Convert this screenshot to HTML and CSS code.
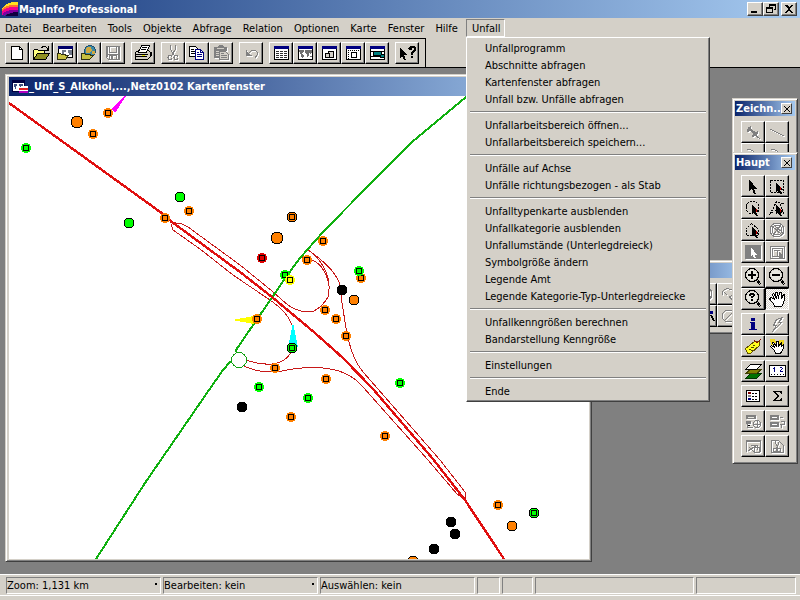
FILE: index.html
```html
<!DOCTYPE html>
<html lang="de">
<head>
    <meta charset="UTF-8">
    <meta name="viewport" content="width=device-width, initial-scale=1.0">
    <title>MapInfo Professional</title>
    <link rel="stylesheet" href="styles.css">
</head>
<body>
    <!-- icon sprite, all icons share a 20x18 grid -->
    <svg class="sprite" aria-hidden="true">
        <symbol id="new" viewBox="0 0 20 18"><path d="M4.5 2.5h8l3 3v10h-11z" fill="#fff" stroke="#000"/><path d="M12.500 2.500v3h3" fill="none" stroke="#000"/></symbol>
        <symbol id="open" viewBox="0 0 20 18"><path d="M2.500 15.500v-9l1-1h3l1 1h6v3" fill="#ffff80" stroke="#000"/><path d="M2.500 15.500l4-6h12l-4 6z" fill="#909020" stroke="#000"/><path d="M10.500 4.500l1-2h3l2 2v1M17.500 2v4h-4" fill="none" stroke="#000"/></symbol>
        <symbol id="opentable" viewBox="0 0 20 18"><path d="M3.500 2.500h14v11h-14z" fill="#fff" stroke="#000"/><path d="M3 2h15v3H3z" fill="#000068"/><path d="M7 6h4v2H9v2H7zM13 6h4v5h-3V9h-1z" fill="#707888"/><path d="M2.500 15.500v-6h3l1 1h4v1h3l-3 4z" fill="#c8c040" stroke="#303010"/></symbol>
        <symbol id="openweb" viewBox="0 0 20 18"><circle cx="11" cy="7" r="5.500" fill="#3a8aa8" stroke="#205070"/><path d="M8 3h4l1 3-3 3H7V6zM13 7h3v3h-3z" fill="#d0a840"/><path d="M2.500 15.500v-6h3l1 1h5v1h3l-4 4z" fill="#c8c040" stroke="#303010"/></symbol>
        <symbol id="save" viewBox="0 0 20 18"><path d="M3.500 2.500h13v13h-11l-2-2zM6.500 2.500v6h7v-6M6.500 15v-4h7v4" fill="none" stroke="#808080"/><path d="M5 10h10v1H5zM8 12h2v3H8zM15 3h1v12h-1zM4 3h1v10H4z" fill="#808080"/></symbol>
        <symbol id="print" viewBox="0 0 20 18"><path d="M2.500 8.500l3-2h10l2 2v4l-3 3h-12z" fill="#d4d0c8" stroke="#000"/><path d="M5.500 8.500l3-7h8l-3 7z" fill="#fff" stroke="#000"/><path d="M9 3.500h5M8 5.500h5M3 10.500h12M3 12.500h11M15 15l3-3V8" stroke="#000" fill="none"/><path d="M9 11h3v1H9z" fill="#e8e000"/></symbol>
        <symbol id="cut" viewBox="0 0 20 18"><path d="M7.500 1v4l4 7M12.500 1v4l-4 7" fill="none" stroke="#808080"/><ellipse cx="7" cy="13.500" rx="2" ry="2.500" fill="none" stroke="#808080"/><ellipse cx="13" cy="13.500" rx="2" ry="2.500" fill="none" stroke="#808080"/></symbol>
        <symbol id="copy" viewBox="0 0 20 18"><path d="M2.500 2.500h6l2 2v8h-8z" fill="#fff" stroke="#000"/><path d="M4 5.500h3M4 7.500h5M4 9.500h5" stroke="#000"/><path d="M8.500 5.500h5l3 3v7h-8z" fill="#fff" stroke="#000080"/><path d="M13.500 5.500v3h3M10 8.500h2M10 10.500h5M10 12.500h5" stroke="#000080" fill="none"/></symbol>
        <symbol id="paste" viewBox="0 0 20 18"><path d="M3 3h3l2-2h3l2 2h3v4h-3v7H3z" fill="#808080"/><path d="M6 4.500h7M5 7.500h3M5 9.500h3M5 11.500h3" stroke="#d4d0c8"/><path d="M8.500 7.500h6l3 3v5h-9z" fill="#d4d0c8" stroke="#808080"/><path d="M10 9.500h3M10 11.500h6M10 13.500h6" stroke="#808080"/></symbol>
        <symbol id="undo" viewBox="0 0 20 18"><path d="M5.500 6v5.500H11M6 11l3-3 2-2h3l2 2v3l-2 3" fill="none" stroke="#808080"/><path d="M6 8l4 4H6z" fill="#808080"/></symbol>
        <symbol id="table" viewBox="0 0 20 18"><path d="M3.500 2.500h14v13h-14z" fill="#fff" stroke="#000"/><path d="M3 2h15v3H3z" fill="#000080"/><path d="M5 7.500h11M5 9.500h11M5 11.500h11M5 13.500h11" stroke="#303030" stroke-dasharray="3 1"/></symbol>
        <symbol id="mapwin" viewBox="0 0 20 18"><path d="M3.500 2.500h14v13h-14z" fill="#fff" stroke="#000"/><path d="M3 2h15v3H3z" fill="#000080"/><path d="M4 6h5v1l-1 2H7v1l2 1v1l-1 2H7l-1-3-1-2-1-1zM10 6h7v2l-1 1v1h-1l-1-1v2l-1 2h-1v-3l-2-1zM15 12h2v1h-2z" fill="#707070"/></symbol>
        <symbol id="graph" viewBox="0 0 20 18"><path d="M3.500 2.500h14v13h-14z" fill="#fff" stroke="#000"/><path d="M3 2h15v3H3z" fill="#000080"/><path d="M6.500 9.500h4v4h-4zM9.500 7.500h5v6h-4v-4h-1z" fill="#d4d0c8" stroke="#000"/></symbol>
        <symbol id="layout" viewBox="0 0 20 18"><path d="M3.500 2.500h14v13h-14z" fill="#fff" stroke="#000"/><path d="M3 2h15v3H3z" fill="#000080"/><path d="M5 6.500h12" stroke="#000" stroke-dasharray="1 1"/><path d="M5.500 6v9" stroke="#000" stroke-dasharray="1 1"/><path d="M8.500 8.500h5v5h-5z" fill="#fff" stroke="#000"/></symbol>
        <symbol id="district" viewBox="0 0 20 18"><path d="M3.500 2.500h14v13h-14z" fill="#fff" stroke="#000"/><path d="M3 2h15v3H3z" fill="#000080"/><path d="M4 7.500h13M4 12.500h13" stroke="#000"/><path d="M6.500 7.500h8v3h3v3h-4v-2h-7z" fill="#008080" stroke="#000"/></symbol>
        <symbol id="help" viewBox="0 0 20 18"><path d="M3 3v11l2-2 2 4h2l-2-5h3z"/><path d="M11 4l2-2h4l2 2v3l-3 2v2h-2V8l3-2V4h-2v2h-3zM14 12h2v2h-2z"/></symbol>

        <symbol id="pointer" viewBox="0 0 20 18"><path d="M6 2v12l3-2 2 5h2l-2-5h3z"/></symbol>
        <symbol id="arrow" viewBox="0 0 20 18"><path d="M9 5v10l2-1 2 3h2l-2-4h3z"/><path d="M13.500 10v3" stroke="#c00000"/></symbol>
        <symbol id="selrect" viewBox="0 0 20 18"><path d="M3.500 3.500h13v12h-13z" fill="none" stroke="#000" stroke-dasharray="2 1"/><use href="#arrow"/></symbol>
        <symbol id="selradius" viewBox="0 0 20 18"><circle cx="9.500" cy="8.500" r="6.500" fill="none" stroke="#000" stroke-dasharray="2 1"/><use href="#arrow"/></symbol>
        <symbol id="selpoly" viewBox="0 0 20 18"><path d="M9.500 2.500l-6 12 5-3 8 3-3-9 2-1z" fill="none" stroke="#000" stroke-dasharray="2 1"/><use href="#arrow"/></symbol>
        <symbol id="selborder" viewBox="0 0 20 18"><path d="M8.500 2.500l-5 5v7h12v-6z" fill="none" stroke="#000" stroke-dasharray="2 1"/><use href="#arrow"/></symbol>
        <symbol id="unselect" viewBox="0 0 20 18"><circle cx="10" cy="9" r="7" fill="none" stroke="#808080"/><circle cx="10" cy="9" r="5" fill="none" stroke="#808080"/><path d="M5 5l10 9M7 4l9 8M6 14l8-10" stroke="#808080"/></symbol>
        <symbol id="invert" viewBox="0 0 20 18"><path d="M2 2h16v14H2z" fill="#808080"/><path d="M8 4v9l2-1 1 3h2l-1-3h2z" fill="#fff"/></symbol>
        <symbol id="infowin" viewBox="0 0 20 18"><path d="M3.500 3.500h14v12h-14zM5.500 5.500h10v8h-10zM7 7.500h6M10.500 8v5" fill="none" stroke="#808080"/><path d="M12 9v6l4 1v-3z" fill="#808080"/></symbol>
        <symbol id="lens" viewBox="0 0 20 18"><circle cx="9" cy="7" r="6.500" fill="none" stroke="#000"/><circle cx="9" cy="7" r="5" fill="#e8e8e0"/><path d="M13 12l4 5M14 11l4 5" stroke="#000"/></symbol>
        <symbol id="zoomin" viewBox="0 0 20 18"><use href="#lens"/><path d="M5 6h8v2H5zM8 3h2v8H8z"/></symbol>
        <symbol id="zoomout" viewBox="0 0 20 18"><use href="#lens"/><path d="M5 6h8v2H5z"/></symbol>
        <symbol id="zoomview" viewBox="0 0 20 18"><use href="#lens"/><path d="M6 4h1V3h4v1h1v2h-1v1h-1v1H8V6h2V5H8v1H6zM8 9h2v2H8z"/></symbol>
        <symbol id="hand" viewBox="0 0 20 18"><path d="M7.500 16.500l-1-3-3-3-1-2 2-1 3 2-2-5 1-1 1 1 2 4-1-6h2l1 6 1-6h2v6l2-4h1v5l-1 4-2 3z" fill="#fff" stroke="#000"/></symbol>
        <symbol id="info" viewBox="0 0 20 18"><path d="M8 3h4v3H8zM7 7h5v7h2v1H6v-1h2V8H7z" fill="#000080"/></symbol>
        <symbol id="hotlink" viewBox="0 0 20 18"><path d="M15.500 2.500l-6 2-3 6h3l-4 6 9-9h-3z" fill="none" stroke="#808080"/></symbol>
        <symbol id="label" viewBox="0 0 20 18"><path d="M2.500 11.500l9-7h5v4l-9 8h-3z" fill="#ffff20" stroke="#605000"/><path d="M6 12.500h2M8 10.500h3M10 8.500h2M8 13.500h2" stroke="#504000"/><path d="M14 6l4-4M11 3l3 3" stroke="#900000"/></symbol>
        <symbol id="drag" viewBox="0 0 20 18"><path d="M3 2h5l1 3-2 3H4zM12 3h5v3l-3 3-2-2z" fill="#f0d820"/><path d="M8.500 16.500l-1-3-4-4 1-1 3 2-2-5h1l3 4v-5h2v5l3-4v4l2-2v4l-3 5z" fill="#fff" stroke="#000"/></symbol>
        <symbol id="layers" viewBox="0 0 20 18"><path d="M2.500 16.500l5-5h11l-5 5z" fill="#007000" stroke="#003000"/><path d="M2.500 11.500l5-4h11l-5 4z" fill="#808000" stroke="#404000"/><path d="M2.500 7.500l5-5h11l-5 5z" fill="#fff" stroke="#000"/></symbol>
        <symbol id="ruler" viewBox="0 0 20 18"><path d="M2.500 3.500h16v11h-16z" fill="#fff" stroke="#000"/><path d="M7.500 5v5M6 6.500h1M13 5.500h2M15.500 6v1M14.500 7v1M13.500 8v1M13 9.500h3" stroke="#000080" fill="none"/><path d="M4 12.500h14" stroke="#000" stroke-dasharray="1 2"/></symbol>
        <symbol id="legend" viewBox="0 0 20 18"><path d="M3.500 3.500h13v11h-13z" fill="#fff" stroke="#000"/><path d="M5 5h3v2H5z" fill="#800000"/><path d="M5 8h3v2H5z" fill="#808080"/><path d="M5 11h3v2H5z" fill="#000080"/><path d="M9 6.500h6M9 9.500h6M9 12.500h6" stroke="#000" stroke-dasharray="2 1"/></symbol>
        <symbol id="sum" viewBox="0 0 20 18"><path d="M6 4h9v3h-1l-1-2H9l3 4-3 4h4l1-2h1v3H6v-1l4-4-4-4z"/></symbol>
        <symbol id="target" viewBox="0 0 20 18"><path d="M3 3h10v4H3zM3 9h5v3H3z" fill="#808080"/><path d="M5 5.500h6M3.500 12.500v2h6M12 9.500h3" stroke="#e8e8e0"/><circle cx="14" cy="12" r="3.500" fill="none" stroke="#808080"/><path d="M4.500 12v3h5M11 12.500h6M14.500 9v6" stroke="#808080" fill="none"/></symbol>
        <symbol id="assign" viewBox="0 0 20 18"><path d="M3 3h9v5H3zM3 10h9v5H3z" fill="#808080"/><path d="M5 5.500h5M5 12.500h5" stroke="#fff"/><path d="M13 5.500h3M14 9.500h3v3h-3v3M13 12.500h4" stroke="#808080" fill="none"/></symbol>
        <symbol id="clip" viewBox="0 0 20 18"><path d="M3.500 15v-12h14v12M3 4.500h14M5 14l9-6M6 10l5 5M8 8h6v5" fill="none" stroke="#808080"/><circle cx="14" cy="13" r="3" fill="none" stroke="#808080"/></symbol>
        <symbol id="clipset" viewBox="0 0 20 18"><path d="M4.500 15.500v-12h7l5 5v7zM8 4l3 8M12 5l-3 8" fill="none" stroke="#808080"/><circle cx="8" cy="13" r="2" fill="none" stroke="#808080"/><circle cx="12" cy="13" r="2" fill="none" stroke="#808080"/></symbol>
        <symbol id="pin" viewBox="0 0 20 18"><path d="M5 4l3-1v3l5 3 2-1v3l-2 1 4 4-5-3-3 1 1-3-3-3-3 1z" fill="#808080"/></symbol>
        <symbol id="line" viewBox="0 0 20 18"><path d="M3 6l14 7" stroke="#808080"/></symbol>
        <symbol id="arc" viewBox="0 0 20 18"><path d="M4 4q8 0 11 10" fill="none" stroke="#808080"/></symbol>
        <symbol id="shape" viewBox="0 0 20 18"><path d="M3 10q0-7 7-6 6 1 4 6l-4 2 4 3M5 7l3 3" fill="none" stroke="#808080"/></symbol>
        <symbol id="ellipse" viewBox="0 0 20 18"><ellipse cx="10" cy="9" rx="7" ry="6" fill="none" stroke="#808080"/><path d="M5 14L15 4" stroke="#808080"/></symbol>
        <symbol id="node" viewBox="0 0 20 18"><path d="M14 4h4v3h-4z" fill="#000080"/><path d="M15 8h2l3 6h-2z"/></symbol>
    </svg>

    <header class="titlebar app-title">
        <svg class="logo" viewBox="0 0 16 16"><path d="M0 7Q6 0 16 1v4Q6 4 0 11z" fill="#ffe020"/><path d="M0 8Q6 3 16 4v3Q6 7 0 11z" fill="#ff7030"/><path d="M0 10Q6 5 16 6v4Q6 9 0 14z" fill="#f00090"/><path d="M0 13Q6 8 16 9v3Q7 11 2 15z" fill="#8000a0"/><path d="M3 15Q8 11 16 11v4z" fill="#100040"/></svg>
        <h1>MapInfo Professional</h1>
        <div class="window-buttons">
            <button aria-label="Minimieren"><svg viewBox="0 0 12 10"><path d="M2 7h6v2H2z"/></svg></button>
            <button aria-label="Wiederherstellen"><svg viewBox="0 0 12 10"><path d="M4 0h7v6H9V5h1V2H5v1H4zM1 3h7v6H1zM2 5v3h5V5z" fill-rule="evenodd"/></svg></button>
            <button aria-label="Schließen"><svg viewBox="0 0 12 10"><path d="M2 1h2l2 2 2-2h2L7 5l3 4H8L6 6 4 9H2l3-4z"/></svg></button>
        </div>
    </header>

    <nav class="menubar">
        <button>Datei</button>
        <button>Bearbeiten</button>
        <button>Tools</button>
        <button>Objekte</button>
        <button>Abfrage</button>
        <button>Relation</button>
        <button>Optionen</button>
        <button>Karte</button>
        <button>Fenster</button>
        <button>Hilfe</button>
        <div class="menu-open">
            <button class="active">Unfall</button>
            <div class="dropdown">
                <button>Unfallprogramm</button>
                <button>Abschnitte abfragen</button>
                <button>Kartenfenster abfragen</button>
                <button>Unfall bzw. Unfälle abfragen</button>
                <hr>
                <button>Unfallarbeitsbereich öffnen...</button>
                <button>Unfallarbeitsbereich speichern...</button>
                <hr>
                <button>Unfälle auf Achse</button>
                <button>Unfälle richtungsbezogen - als Stab</button>
                <hr>
                <button>Unfalltypenkarte ausblenden</button>
                <button>Unfallkategorie ausblenden</button>
                <button>Unfallumstände (Unterlegdreieck)</button>
                <button>Symbolgröße ändern</button>
                <button>Legende Amt</button>
                <button>Legende Kategorie-Typ-Unterlegdreiecke</button>
                <hr>
                <button>Unfallkenngrößen berechnen</button>
                <button>Bandarstellung Kenngröße</button>
                <hr>
                <button>Einstellungen</button>
                <hr>
                <button>Ende</button>
            </div>
        </div>
    </nav>

    <div class="toolbar-row">
        <div class="toolbar">
            <div class="group">
                <button class="tool" aria-label="Neu"><svg><use href="#new"/></svg></button>
                <button class="tool" aria-label="Öffnen"><svg><use href="#open"/></svg></button>
                <button class="tool" aria-label="Tabelle öffnen"><svg><use href="#opentable"/></svg></button>
                <button class="tool" aria-label="Webdienst öffnen"><svg><use href="#openweb"/></svg></button>
                <button class="tool off" aria-label="Speichern"><svg><use href="#save"/></svg></button>
            </div>
            <div class="group">
                <button class="tool" aria-label="Drucken"><svg><use href="#print"/></svg></button>
            </div>
            <div class="group">
                <button class="tool off" aria-label="Ausschneiden"><svg><use href="#cut"/></svg></button>
                <button class="tool" aria-label="Kopieren"><svg><use href="#copy"/></svg></button>
                <button class="tool off" aria-label="Einfügen"><svg><use href="#paste"/></svg></button>
            </div>
            <div class="group">
                <button class="tool off" aria-label="Rückgängig"><svg><use href="#undo"/></svg></button>
            </div>
            <div class="group">
                <button class="tool" aria-label="Neue Anzeige"><svg><use href="#table"/></svg></button>
                <button class="tool" aria-label="Neue Karte"><svg><use href="#mapwin"/></svg></button>
                <button class="tool" aria-label="Neues Diagramm"><svg><use href="#graph"/></svg></button>
                <button class="tool" aria-label="Neues Layout"><svg><use href="#layout"/></svg></button>
                <button class="tool" aria-label="Neue Gebietsaufteilung"><svg><use href="#district"/></svg></button>
            </div>
            <div class="group">
                <button class="tool" aria-label="Direkthilfe"><svg><use href="#help"/></svg></button>
            </div>
        </div>
    </div>

    <main class="desktop">
        <section class="window map-window">
            <div class="titlebar">
                <svg class="logo" viewBox="0 0 16 16"><path d="M0 1h13v12H0z" fill="#000040"/><path d="M1 4h11v8H1z" fill="#fff"/><path d="M2 5h3v2H4v3H3V8H2zM7 5h4v3H9v2H8V7H7z" fill="#405080"/><path d="M7 9l3-2h6v7H7z" fill="#fff"/><path d="M7 9h9v2H7z" fill="#e02020"/><path d="M7 12h9v2H7z" fill="#b000c0"/></svg>
                <h2>_Unf_S_Alkohol,...,Netz0102 Kartenfenster</h2>
            </div>
            <svg class="map" viewBox="9 96 580 463" preserveAspectRatio="xMinYMin slice">
                <defs>
                    <g id="halo"><circle r="5" stroke="none"/><circle r="3" fill="none" stroke="#000"/></g>
                    <g id="dot"><circle r="5" stroke="#000"/></g>
                    <g id="ring"><circle r="5" stroke="#000"/><circle r="3" fill="none" stroke="#000"/></g>
                    <g id="big"><circle r="6" stroke="#000"/></g>
                </defs>

                <g class="ramp">
                    <path d="M170 222L182 224L188 227L240 265L272 291L281 299Q291 309 301 311H314Q322 307 328 297Q331 284 326 272Q320 258 308 250"/>
                    <path d="M171 224L173 230L200 249L233 275L267 298Q290 313 293 329V348Q288 362 272 364Q260 365 246 360"/>
                    <path d="M244 366Q260 374 282 371Q315 364 339 371Q354 376 363 387L428 460L457 494L466 500"/>
                    <path d="M308 250Q337 270 340 286L342 303L347 334Q353 361 364 373L440 460L465 492L466 500"/>
                    <path d="M302 257Q323 260 328 281"/>
                </g>
                <path class="road" d="M466 97L412 142L374 180L323 232L300 258L286 277L236 350L239 360L230 362L223 370L209 390L145 483L96 559"/>
                <circle class="junction" cx="239" cy="360" r="7.500"/>
                <path class="motorway" d="M9 103L163 214L172 222L240 272L272 297L315 333L343 358L373 389L433 459L465 500L504 559"/>

                <path d="M126 96h-2L111 109L115 113z" fill="#f0f"/>
                <path d="M232 320L254 316V324z" fill="#ff0"/>
                <path d="M293 323L288 347H298z" fill="#0ff"/>

                <g fill="#ff8000">
                    <use href="#big" x="77" y="122"/><use href="#big" x="277" y="238"/>
                    <use href="#halo" x="108" y="113"/><use href="#halo" x="93" y="134"/>
                    <use href="#halo" x="189" y="211"/><use href="#halo" x="165" y="218"/>
                    <use href="#halo" x="323" y="241"/><use href="#halo" x="307" y="260"/>
                    <use href="#halo" x="361" y="278"/><use href="#halo" x="325" y="310"/>
                    <use href="#halo" x="336" y="319"/><use href="#halo" x="346" y="336"/>
                    <use href="#halo" x="257" y="319"/><use href="#halo" x="275" y="368"/>
                    <use href="#halo" x="326" y="379"/><use href="#halo" x="291" y="417"/>
                    <use href="#halo" x="385" y="436"/><use href="#halo" x="498" y="505"/>
                    <use href="#ring" x="292" y="217"/>
                    <use href="#dot" x="354" y="300"/><use href="#dot" x="512" y="526"/><use href="#dot" x="413" y="561"/>
                </g>
                <g fill="#0f0">
                    <use href="#halo" x="26" y="148"/><use href="#halo" x="285" y="275"/>
                    <use href="#halo" x="359" y="271"/><use href="#halo" x="259" y="387"/>
                    <use href="#halo" x="308" y="398"/><use href="#halo" x="400" y="383"/>
                    <use href="#dot" x="180" y="197"/><use href="#dot" x="129" y="223"/>
                    <use href="#ring" x="292" y="348"/><use href="#ring" x="534" y="513"/>
                </g>
                <use href="#halo" x="290" y="280" fill="#ff0"/>
                <use href="#halo" x="262" y="258" fill="#e00000"/>
                <g fill="#000">
                    <use href="#dot" x="342" y="290"/><use href="#dot" x="242" y="407"/>
                    <use href="#dot" x="451" y="522"/><use href="#dot" x="455" y="534"/>
                    <use href="#dot" x="434" y="549"/>
                </g>
            </svg>
        </section>

        <section class="window palette palette-extra">
            <div class="titlebar"></div>
            <div class="tools">
                <button class="tool off" aria-label="Extra 1"></button>
                <button class="tool off" aria-label="Extra 2"></button>
                <button class="tool off" aria-label="Extra 3"></button>
                <button class="tool off" aria-label="Extra 4"><svg><use href="#unselect"/></svg></button>
                <button class="tool off" aria-label="Extra 5"><svg><use href="#shape"/></svg></button>
                <button class="tool off" aria-label="Extra 6"></button>
                <button class="tool off" aria-label="Extra 7"></button>
                <button class="tool off" aria-label="Extra 8"></button>
                <button class="tool" aria-label="Extra 9"><svg><use href="#node"/></svg></button>
                <button class="tool off" aria-label="Extra 10"><svg><use href="#ellipse"/></svg></button>
            </div>
        </section>

        <section class="window palette palette-draw">
            <div class="titlebar">
                <h2>Zeichn...</h2>
                <button class="close" aria-label="Schließen"><svg viewBox="0 0 8 8"><path d="M1 1l6 6M7 1L1 7" stroke="#000"/></svg></button>
            </div>
            <div class="tools">
                <button class="tool off" aria-label="Symbol"><svg><use href="#pin"/></svg></button>
                <button class="tool off" aria-label="Linie"><svg><use href="#line"/></svg></button>
                <button class="tool off" aria-label="Polylinie"><svg><use href="#arc"/></svg></button>
                <button class="tool off" aria-label="Bogen"><svg><use href="#arc"/></svg></button>
            </div>
        </section>

        <section class="window palette palette-main">
            <div class="titlebar">
                <h2>Haupt</h2>
                <button class="close" aria-label="Schließen"><svg viewBox="0 0 8 8"><path d="M1 1l6 6M7 1L1 7" stroke="#000"/></svg></button>
            </div>
            <div class="tools">
                <button class="tool" aria-label="Auswahl"><svg><use href="#pointer"/></svg></button>
                <button class="tool" aria-label="Rechteckauswahl"><svg><use href="#selrect"/></svg></button>
                <button class="tool" aria-label="Radiusauswahl"><svg><use href="#selradius"/></svg></button>
                <button class="tool" aria-label="Polygonauswahl"><svg><use href="#selpoly"/></svg></button>
                <button class="tool" aria-label="Gebietsauswahl"><svg><use href="#selborder"/></svg></button>
                <button class="tool off" aria-label="Auswahl aufheben"><svg><use href="#unselect"/></svg></button>
                <button class="tool off" aria-label="Auswahl umkehren"><svg><use href="#invert"/></svg></button>
                <button class="tool off" aria-label="Diagrammauswahl"><svg><use href="#infowin"/></svg></button>
            </div>
            <div class="tools">
                <button class="tool" aria-label="Vergrößern"><svg><use href="#zoomin"/></svg></button>
                <button class="tool" aria-label="Verkleinern"><svg><use href="#zoomout"/></svg></button>
                <button class="tool" aria-label="Ansicht ändern"><svg><use href="#zoomview"/></svg></button>
                <button class="tool pressed" aria-label="Verschieben"><svg><use href="#hand"/></svg></button>
            </div>
            <div class="tools">
                <button class="tool" aria-label="Info"><svg><use href="#info"/></svg></button>
                <button class="tool off" aria-label="Hotlink"><svg><use href="#hotlink"/></svg></button>
                <button class="tool" aria-label="Beschriften"><svg><use href="#label"/></svg></button>
                <button class="tool" aria-label="Karte ziehen"><svg><use href="#drag"/></svg></button>
            </div>
            <div class="tools">
                <button class="tool" aria-label="Layerkontrolle"><svg><use href="#layers"/></svg></button>
                <button class="tool" aria-label="Lineal"><svg><use href="#ruler"/></svg></button>
            </div>
            <div class="tools">
                <button class="tool" aria-label="Legende"><svg><use href="#legend"/></svg></button>
                <button class="tool" aria-label="Statistik"><svg><use href="#sum"/></svg></button>
            </div>
            <div class="tools">
                <button class="tool off" aria-label="Zielgebiet"><svg><use href="#target"/></svg></button>
                <button class="tool off" aria-label="Zuweisen"><svg><use href="#assign"/></svg></button>
            </div>
            <div class="tools">
                <button class="tool off" aria-label="Ausschnitt ein/aus"><svg><use href="#clip"/></svg></button>
                <button class="tool off" aria-label="Ausschnitt setzen"><svg><use href="#clipset"/></svg></button>
            </div>
        </section>
    </main>

    <footer class="statusbar">
        <div class="cells">
            <button class="cell">Zoom: 1,131 km<span class="tick"></span></button>
            <button class="cell">Bearbeiten: kein<span class="tick"></span></button>
            <div class="cell">Auswählen: kein</div>
            <div class="cell"></div>
            <div class="cell"></div>
            <div class="cell"></div>
            <div class="cell"></div>
        </div>
    </footer>
</body>
</html>
```
FILE: styles.css
```css
* {
    box-sizing: border-box;
}

body {
    margin: 0;
    height: 100vh;
    display: flex;
    flex-direction: column;
    overflow: hidden;
    background-color: #d4d0c8;
    color: #000;
    font-family: Tahoma, "DejaVu Sans Condensed", sans-serif;
    font-size: 11px;
    line-height: 17px;
}

button {
    margin: 0;
    padding: 0;
    border: none;
    background: none;
    color: inherit;
    font: inherit;
    text-align: left;
    white-space: nowrap;
}

svg {
    display: block;
    shape-rendering: crispEdges;
}

.sprite {
    position: absolute;
    width: 0;
    height: 0;
}

/* title bars */
.titlebar {
    display: flex;
    align-items: center;
    height: 18px;
    flex: none;
    background: linear-gradient(to right, #0a246a, #a6caf0);
    color: #fff;
}

.app-title {
    padding: 0 3px 0 2px;
    background: linear-gradient(to right, #1a3c80, #a6caf0);
}

.titlebar h1,
.titlebar h2 {
    margin: 0;
    flex: 1;
    font-size: 11px;
    font-weight: bold;
    white-space: nowrap;
}

.logo {
    width: 16px;
    height: 16px;
    margin-right: 1px;
}

.window-buttons {
    display: flex;
}

.window-buttons button {
    width: 16px;
    height: 14px;
    padding: 1px;
    background-color: #d4d0c8;
    border: 1px solid;
    border-color: #fff #404040 #404040 #fff;
    box-shadow: inset -1px -1px #808080;
}

.window-buttons button:last-child {
    margin-left: 2px;
}

.window-buttons svg {
    width: 12px;
    height: 10px;
}

/* menu */
.menubar {
    display: flex;
    align-items: center;
    height: 20px;
    flex: none;
}

.menubar > button {
    padding: 0 6px 0 5px;
}

.menu-open {
    position: relative;
    margin-left: 2px;
}

.active {
    display: block;
    height: 18px;
    padding: 0 4px 0 5px;
    border: 1px solid;
    border-color: #808080 #fff #fff #808080;
}

.dropdown {
    position: absolute;
    top: 18px;
    left: 0;
    z-index: 10;
    width: 244px;
    padding: 1px 2px 2px;
    background-color: #d4d0c8;
    border: 1px solid;
    border-color: #fff #404040 #404040 #fff;
    box-shadow: inset -1px -1px #808080;
}

.dropdown button {
    display: block;
    width: 100%;
    height: 17px;
    padding: 2px 0 0 16px;
    line-height: 15px;
}

.dropdown hr {
    height: 2px;
    margin: 4px 1px 3px;
    border: none;
    border-top: 1px solid #808080;
    border-bottom: 1px solid #fff;
}

/* toolbar */
.toolbar-row {
    flex: none;
    border-bottom: 1px solid #000;
}

.toolbar {
    display: flex;
    gap: 6px;
    width: fit-content;
    padding: 3px 6px 3px 5px;
    border-top: 1px solid #000;
    border-right: 1px solid #000;
}

.group {
    display: flex;
}

.tool {
    width: 24px;
    height: 22px;
    padding: 1px;
    background-color: #d4d0c8;
    border: 1px solid;
    border-color: #fff #000 #000 #fff;
    box-shadow: inset -1px -1px #808080;
}

.tool svg {
    width: 20px;
    height: 18px;
}

.off svg {
    filter: drop-shadow(1px 1px 0 #fff);
}

.pressed {
    border-color: #000 #fff #fff #000;
    box-shadow: none;
    background: repeating-conic-gradient(#fff 0 25%, #d4d0c8 0 50%) 0 0 / 2px 2px;
}

/* desktop with floating windows */
.desktop {
    position: relative;
    flex: 1;
    overflow: hidden;
    background-color: #808080;
}

.window {
    position: absolute;
    display: flex;
    flex-direction: column;
    padding: 1px;
    background-color: #d4d0c8;
    border: 1px solid;
    border-color: #d4d0c8 #404040 #404040 #d4d0c8;
    box-shadow: inset 1px 1px #fff, inset -1px -1px #808080;
}

.map-window {
    top: 6px;
    right: 208px;
    bottom: 12px;
    left: 5px;
    padding: 2px 2px 2px 3px;
}

.map-window .titlebar {
    height: 19px;
    padding-left: 3px;
}

.map {
    flex: 1;
    min-height: 0;
    width: 100%;
    background-color: #fff;
}

.ramp {
    fill: none;
    stroke: #c81818;
    stroke-width: 1;
}

.road {
    fill: none;
    stroke: #10b010;
    stroke-width: 2;
}

.motorway {
    fill: none;
    stroke: #e01010;
    stroke-width: 2.4;
}

.junction {
    fill: #fff;
    stroke: #10a010;
}

/* tool palettes */
.palette {
    padding: 2px 2px 6px;
}

.palette .titlebar {
    height: 15px;
    margin-bottom: 2px;
    padding: 0 3px 0 1px;
}

.palette .close {
    width: 11px;
    height: 11px;
    padding: 1px;
    background-color: #d4d0c8;
    border: 1px solid #404040;
    border-color: #fff #404040 #404040 #fff;
}

.palette h2 {
    width: 0;
}

.close svg {
    width: 8px;
    height: 8px;
}

.tools {
    display: grid;
    grid-template-columns: repeat(2, 24px);
    margin-top: 3px;
    padding: 0 6px;
}

.palette-main,
.palette-draw {
    right: 2px;
    width: 66px;
}

.palette-draw {
    top: 30px;
}

.palette-main {
    top: 84px;
}

.palette-extra {
    top: 192px;
    right: 50px;
}

.palette-extra .tools {
    grid-template-columns: repeat(5, 24px);
}

/* status bar */
.statusbar {
    flex: none;
    height: 26px;
    border-top: 1px solid #fff;
}

.cells {
    display: grid;
    grid-template-columns: 155px 155px 155px 23px 31px 8fr 5fr;
    gap: 2px;
    padding: 2px 4px 1px 6px;
    border-bottom: 1px solid #fff;
}

.cell {
    display: flex;
    justify-content: space-between;
    height: 17px;
    line-height: 15px;
    border: 1px solid;
    border-color: #808080 #fff #fff #808080;
}

.tick {
    width: 2px;
    height: 2px;
    margin: 5px 3px;
    background-color: #000;
}
```
